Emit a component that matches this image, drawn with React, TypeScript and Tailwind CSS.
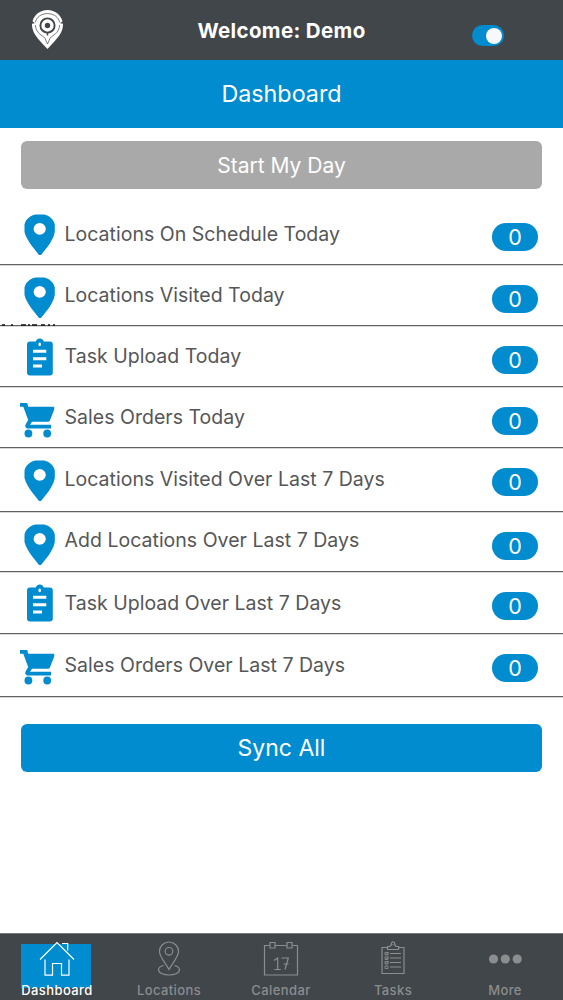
import React from "react";

const BLUE = "#008ccf";

function Pin() {
  return (
    <svg width="32" height="42" viewBox="0 0 32 42" className="shrink-0">
      <path fillRule="evenodd" fill={BLUE} d="M11.500.6h8.500C25.500 1.500 29.500 5.500 30.800 10.500V18C30 22.500 27.500 27 24.500 31.500L17 41h-2L7.500 31.500C4.500 27 1.500 22.500 .5 18V10.500C1.800 5.500 6 1.500 11.500.6ZM15.700 9a6.100 5.900 0 1 0 0 11.800 6.100 5.900 0 0 0 0-11.800Z" />
    </svg>
  );
}

function Clipboard() {
  return (
    <svg width="26" height="38" viewBox="0 0 26 38" className="shrink-0">
      <path fillRule="evenodd" fill={BLUE} d="M3 3.500h5.800C9.500 1.500 10.800.5 12.800.5s3.300 1 4 3H22.800a3 3 0 0 1 3 3v28a3 3 0 0 1-3 3H3a3 3 0 0 1-3-3v-28a3 3 0 0 1 3-3ZM12.700 4.400a1.300 1.900 0 1 0 0 3.800 1.300 1.900 0 0 0 0-3.800ZM6 11.800v3h13.300v-3ZM6 19.200v3h13.300v-3ZM6 26.600v3h9v-3Z" />
    </svg>
  );
}

function Cart() {
  return (
    <svg width="35" height="35" viewBox="0 0 35 35" className="shrink-0">
      <path fill={BLUE} d="M0 0H7.200L8.200 3.800H34.200V6.500L29.800 17.800 28.500 18.800H12L10 21.700H31V25.500H7Q4 24 6 20.800L8.200 17 3.300 3.700H0Z" />
      <circle cx="8.400" cy="30.500" r="3.900" fill={BLUE} />
      <circle cx="27.200" cy="30.500" r="3.900" fill={BLUE} />
    </svg>
  );
}

function Logo() {
  return (
    <svg width="32" height="40" viewBox="0 0 32 40">
      <path fill="#fff" d="M15.500 0C8 0 2 5 .5 11.300L2.800 13.200 0 13.800C-.2 22 4 27 15.500 39 27 27 31.200 22 31 13.800L28.200 13.200l2.300-1.900C29 5 23 0 15.500 0Z" />
      <g fill="none" stroke="#41464a">
        <path strokeWidth=".7" d="M3.300 12.500C4.500 7 9.300 3.600 15.500 3.600S26.500 7 27.700 12.500M3.300 15c.5 6.500 4.700 9.500 8.500 12 1.700 1.200 2.200 4.500 3.700 7 1.500-2.500 2-5.800 3.700-7 3.800-2.500 8-5.500 8.500-12" />
        <circle cx="15.500" cy="15.500" r="7.100" strokeWidth="1.900" />
        <path strokeWidth="1.500" d="M15.500 22v3.500" />
      </g>
      <circle cx="15.500" cy="15.500" r="4" fill="#41464a" stroke="#fff" strokeWidth="2.600" />
    </svg>
  );
}

const rows = [
  { label: "Locations On Schedule Today", icon: "pin", h: "h-[63px]", icn: "pt-[12px]", txt: "pt-[19px]", pill: "pt-[21px]" },
  { label: "Locations Visited Today", icon: "pin", h: "h-[61px]", icn: "pt-[12px]", txt: "pt-[17px]", pill: "pt-[20px]" },
  { label: "Task Upload Today", icon: "clip", h: "h-[61px]", icn: "pt-[12px]", txt: "pt-[17px]", pill: "pt-[20px]" },
  { label: "Sales Orders Today", icon: "cart", h: "h-[61px]", icn: "pt-[16px]", txt: "pt-[17px]", pill: "pt-[20px]" },
  { label: "Locations Visited Over Last 7 Days", icon: "pin", h: "h-[64px]", icn: "pt-[12px]", txt: "pt-[18px]", pill: "pt-[20px]" },
  { label: "Add Locations Over Last 7 Days", icon: "pin", h: "h-[60px]", icn: "pt-[12px]", txt: "pt-[15px]", pill: "pt-[20px]" },
  { label: "Task Upload Over Last 7 Days", icon: "clip", h: "h-[62px]", icn: "pt-[12px]", txt: "pt-[18px]", pill: "pt-[20px]" },
  { label: "Sales Orders Over Last 7 Days", icon: "cart", h: "h-[63px]", icn: "pt-[16px]", txt: "pt-[18px]", pill: "pt-[20px]" },
];

function Row({ r, clipped }: { r: (typeof rows)[number]; clipped: boolean }) {
  return (
    <li className={`relative flex items-start border-b border-[#616264] shadow-[0_1px_0_#d8d8d8] ${r.h}`}>
      <div className={`w-[64px] shrink-0 ${r.icn} ${r.icon === "pin" ? "pl-[24px]" : r.icon === "clip" ? "pl-[27px]" : "pl-[20px]"}`}>
        {r.icon === "pin" ? <Pin /> : r.icon === "clip" ? <Clipboard /> : <Cart />}
      </div>
      <div className={`grow whitespace-nowrap pl-[0.500px] text-[19.5px] leading-[26px] tracking-[0.02px] text-[#555658] ${r.txt}`}>{r.label}</div>
      <div className={`pr-[25px] ${r.pill}`}>
        <div className="flex h-[27.5px] w-[46px] items-center justify-center rounded-full bg-[#008ccf] pt-px text-[21.5px] leading-[27px] text-white">0</div>
      </div>
      {clipped && (
        <svg className="absolute -bottom-px left-0" width="60" height="2" viewBox="0 0 60 2">
          <path stroke="#111" strokeWidth="1.500" d="M2 1h3M11 1h2M21 1h5M28 1h2M32 1h5M41 1h4M48 1h2M53 1h2" />
        </svg>
      )}
    </li>
  );
}

function TabIcon({ name }: { name: string }) {
  return (
    <svg width="36" height="36" viewBox="0 0 36 36" fill="none" stroke={name === "Dashboard" ? "#fff" : "#8b8d8f"} strokeWidth="1.200">
      {name === "Dashboard" && <path d="M1 18.500 18 1.500l17 17M6 18.500v15.700h7.500V22.500h9v11.700h7.500V18.500M23 2.500h5.700v7" />}
      {name === "Locations" && (
        <>
          <path d="M18 28.500C15 22.500 8.500 16 8.500 10.500a9.500 9.500 0 0 1 19 0C27.500 16 21 22.500 18 28.500Z" />
          <circle cx="18" cy="10.300" r="3.800" />
          <path d="M12.500 24.500C9.500 25.300 7.500 26.800 7.500 28.800c0 3 4.700 5.200 10.500 5.200s10.500-2.200 10.500-5.200c0-2-2-3.500-5-4.300" />
        </>
      )}
      {name === "Calendar" && (
        <>
          <path d="M6.500 4.500H1.500v29.500h33V4.500h-5M12 4.500h12" />
          <path d="M7 1.500h5v5.500H7ZM24 1.500H29v5.500h-5Z" />
          <path d="M11 19.500l3.700-2.500v11.500M11.500 28.500h6.300M18.500 17h6.800L22 28.500M20.500 23h5" />
        </>
      )}
      {name === "Tasks" && (
        <>
          <path d="M13 6.500H7v26h22v-26h-6" />
          <path d="M12.500 8.500V5.500H15c.5-1.300 1.200-1.800 1.800-1.900a1.600 1.600 0 1 1 2.500 0c.7.1 1.300.6 1.800 1.900h2.500V8.500Z" />
          <path d="M15 12.500h11M15 17h11M15 21.500h11M15 26h11" />
          <path strokeWidth=".9" d="M10 11.500h3V14h-3ZM10 16h3v2.500h-3ZM10 20.500h3V23h-3ZM10 25h3v2.500h-3ZM10.500 12.500l1.200 1 2-2.500M10.500 17l1.200 1 2-2.500M10.500 21.500l1.200 1 2-2.500" />
        </>
      )}
      {name === "More" && (
        <g fill="#8b8d8f" stroke="none">
          <circle cx="6.500" cy="18" r="4.600" />
          <circle cx="18.300" cy="18" r="4.600" />
          <circle cx="30.200" cy="18" r="4.600" />
        </g>
      )}
    </svg>
  );
}

export default function App() {
  return (
    <div className="flex h-[1000px] w-[563px] flex-col overflow-hidden bg-white font-['Inter',sans-serif]">
      <header className="grid h-[60px] shrink-0 grid-cols-[120px_1fr_120px] bg-[#41464a]">
        <div className="pl-[32px] pt-[10px]"><Logo /></div>
        <h1 className="pt-[17px] text-center text-[20.500px] font-bold leading-[28px] tracking-[0.350px] text-white">Welcome: Demo</h1>
        <div className="flex justify-end pr-[59px] pt-[25px]">
          <div className="flex h-[21px] w-[32px] items-center justify-end rounded-full bg-[#008ccf] pr-[2px]">
            <div className="size-[16px] rounded-full bg-[#f8f8f8]" />
          </div>
        </div>
      </header>
      <div className="flex h-[68px] shrink-0 items-center justify-center bg-[#008ccf] pt-px text-[23.3px] text-white">Dashboard</div>
      <button className="mx-[21px] mt-[13px] h-[48px] shrink-0 rounded-[6px] bg-[#a9a9a9] pt-px text-[21px] text-white">Start My Day</button>
      <ul className="mt-[13px] flex flex-col">
        {rows.map((r, i) => <Row key={r.label} r={r} clipped={i === 1} />)}
      </ul>
      <button className="mx-[21px] mt-[27px] h-[48px] shrink-0 rounded-[6px] bg-[#008ccf] text-[23px] text-white">Sync All</button>
      <div className="grow" />
      <nav className="grid h-[67px] shrink-0 grid-cols-5 border-t border-[#75787b] bg-[#41464a] pl-px pr-[2px]">
        {["Dashboard", "Locations", "Calendar", "Tasks", "More"].map((n) => (
          <div key={n} className={`flex flex-col items-center pt-[7px] ${n === "Dashboard" ? "text-white bg-[linear-gradient(#008ccf,#008ccf)] bg-[length:70px_44px] bg-[position:20px_10px] bg-no-repeat" : "text-[#8b8d8f]"}`}>
            <TabIcon name={n} />
            <span className="mt-[4px] text-[13px] font-medium leading-[18px] tracking-[0.4px]">{n}</span>
          </div>
        ))}
      </nav>
    </div>
  );
}
